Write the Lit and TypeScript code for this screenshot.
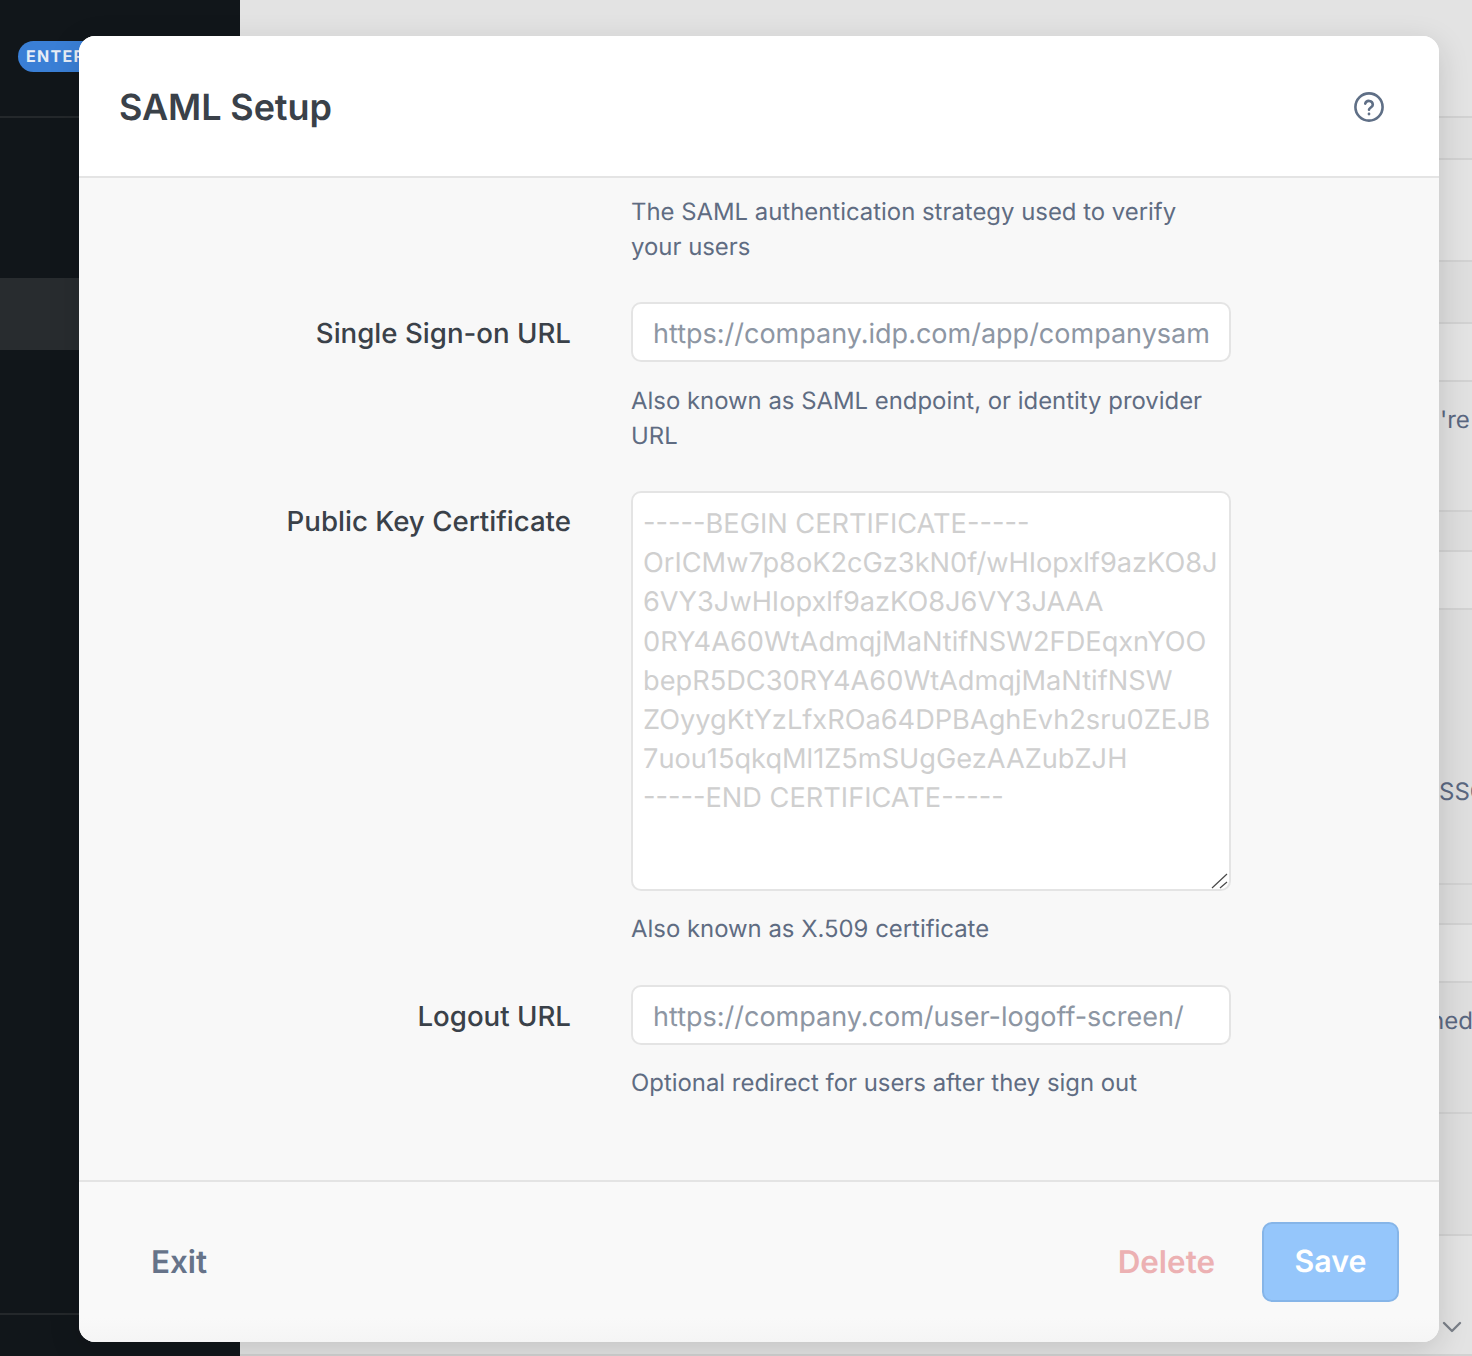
import { LitElement, html, css } from 'lit';
import { customElement } from 'lit/decorators.js';

const CERT = `-----BEGIN CERTIFICATE-----
OrICMw7p8oK2cGz3kN0f/wHIopxlf9azKO8J
6VY3JwHIopxlf9azKO8J6VY3JAAA
0RY4A60WtAdmqjMaNtifNSW2FDEqxnYOO
bepR5DC30RY4A60WtAdmqjMaNtifNSW
ZOyygKtYzLfxROa64DPBAghEvh2sru0ZEJB
7uou15qkqMl1Z5mSUgGezAAZubZJH
-----END CERTIFICATE-----`;

// rows of the dimmed page behind the dialog
const ROWS = [
  { h: 118, bg: '#e3e3e3' },
  { h: 42, bg: '#e0e0e0' },
  { h: 102, bg: '#e3e3e3' },
  { h: 62, bg: '#dedede' },
  { h: 58, bg: '#e3e3e3' },
  { h: 130, bg: '#e1e1e1', text: "'re", left: 1200, top: 23 },
  { h: 40, bg: '#dedede' },
  { h: 58, bg: '#e3e3e3' },
  { h: 275, bg: '#dedede', text: 'SSO', left: 1199, top: 167 },
  { h: 40, bg: '#dedede' },
  { h: 58, bg: '#e3e3e3' },
  { h: 131, bg: '#dedede', text: 'ned', left: 1190, top: 23 },
  { h: 122, bg: '#dedede' },
  { h: 120, bg: '#e3e3e3' },
];

@customElement('app-root')
export class AppRoot extends LitElement {
  static styles = css`
    :host {
      display: block;
      position: relative;
      width: 1472px;
      height: 1356px;
      overflow: hidden;
      font-family: Inter, 'Liberation Sans', sans-serif;
      background: #e3e3e3;
      text-rendering: geometricPrecision;
    }

    .page {
      display: flex;
      height: 100%;
    }

    .sidebar {
      width: 240px;
      flex: none;
      background: #11161a;
      display: flex;
      flex-direction: column;
    }
    .brand {
      height: 118px;
      flex: none;
      box-sizing: border-box;
      padding: 41px 0 0 18px;
      border-bottom: 2px solid #24282b;
    }
    .badge {
      display: inline-block;
      height: 31px;
      line-height: 31px;
      padding: 0 12px 0 8px;
      border-radius: 16px;
      background: #3a7fd6;
      color: #e6edf6;
      font-size: 16px;
      font-weight: 700;
      letter-spacing: 1.3px;
    }
    .nav-gap {
      height: 160px;
      flex: none;
    }
    .nav-active {
      height: 72px;
      flex: none;
      background: #282c2f;
    }
    .nav-rest {
      flex: 1;
    }
    .side-foot {
      height: 41px;
      flex: none;
      border-top: 2px solid #24282b;
    }

    .main {
      flex: 1;
      min-width: 0;
      overflow: hidden;
      position: relative;
    }
    .row {
      box-sizing: border-box;
      border-bottom: 2px solid #d2d2d2;
      white-space: nowrap;
      font-size: 24px;
      line-height: 30px;
      color: #5a6780;
    }
    .chevron {
      position: absolute;
      left: 1202px;
      top: 1320px;
      width: 20px;
      height: 14px;
    }

    .modal {
      position: absolute;
      left: 79px;
      top: 36px;
      width: 1360px;
      height: 1306px;
      border-radius: 16px;
      background: #f8f8f8;
      box-shadow: 0 8px 32px rgba(0, 0, 0, 0.14);
      display: flex;
      flex-direction: column;
      overflow: hidden;
    }
    .head {
      height: 142px;
      flex: none;
      box-sizing: border-box;
      background: #fff;
      border-bottom: 2px solid #e4e4e4;
      display: flex;
      align-items: center;
      justify-content: space-between;
      padding: 1px 54px 0 40px;
    }
    h1 {
      margin: 0;
      padding-top: 1px;
      font-size: 36px;
      font-weight: 600;
      color: #3a4149;
      letter-spacing: -0.1px;
    }
    .help-icon {
      width: 32px;
      height: 32px;
      display: block;
    }

    .body {
      flex: 1;
      box-sizing: border-box;
      padding-top: 17px;
      display: grid;
      grid-template-columns: 492px 600px;
      column-gap: 60px;
      align-content: start;
    }
    label {
      justify-self: end;
      height: 60px;
      box-sizing: border-box;
      padding-top: 1px;
      font-size: 27.65px;
      font-weight: 500;
      line-height: 60px;
      color: #3a4149;
    }
    label.flush {
      padding-top: 0;
    }
    .hint {
      margin: 0;
      font-size: 23.9px;
      line-height: 34.5px;
      color: #5f6c82;
    }
    .hint.top {
      grid-column: 2;
      margin-bottom: 38px;
    }
    .hint.gap {
      grid-column: 2;
      margin-top: 21px;
      margin-bottom: 38px;
    }
    .hint.first {
      margin-top: 22px;
    }
    input,
    textarea {
      display: block;
      width: 100%;
      box-sizing: border-box;
      border: 2px solid #e4e4e4;
      border-radius: 10px;
      background: #fff;
      font-family: inherit;
      margin: 0;
      outline: none;
      text-rendering: geometricPrecision;
    }
    input {
      height: 60px;
      padding: 2px 20px 0;
      font-size: 27px;
    }
    input.low {
      padding-top: 4px;
    }
    input::placeholder {
      color: #8d96a3;
      opacity: 1;
    }
    .area {
      position: relative;
    }
    textarea {
      height: 400px;
      padding: 11px 2px 11px 10px;
      font-size: 27.2px;
      line-height: 39.2px;
      resize: none;
      overflow: hidden;
    }
    textarea::placeholder {
      color: #cfcfcf;
      opacity: 1;
    }
    .grip {
      position: absolute;
      right: 2px;
      bottom: 2px;
      width: 18px;
      height: 17px;
    }

    .foot {
      height: 162px;
      flex: none;
      box-sizing: border-box;
      border-top: 2px solid #e4e4e4;
      background: linear-gradient(#f9f9f9 85%, #f5f5f5);
      display: flex;
      align-items: center;
      padding: 0 40px 0 72px;
      font-size: 31.4px;
      font-weight: 600;
    }
    .exit {
      color: #667389;
    }
    .delete {
      margin-left: auto;
      color: #ecb1b3;
    }
    .save {
      margin-left: 47px;
      width: 137px;
      height: 80px;
      box-sizing: border-box;
      border: 2px solid #86b5e8;
      border-radius: 10px;
      background: #95c6fb;
      color: #fff;
      font: inherit;
      font-size: 30.4px;
      padding: 0;
      text-rendering: geometricPrecision;
    }
  `;

  render() {
    return html`
      <div class="page">
        <aside class="sidebar">
          <div class="brand"><span class="badge">ENTERPRISE</span></div>
          <div class="nav-gap"></div>
          <div class="nav-active"></div>
          <div class="nav-rest"></div>
          <div class="side-foot"></div>
        </aside>
        <main class="main">
          ${ROWS.map(
            (r) => html`<div
              class="row"
              style="height:${r.h}px;background:${r.bg};padding-left:${r.left ?? 0}px;padding-top:${r.top ?? 0}px"
            >${r.text ?? ''}</div>`,
          )}
          <svg class="chevron" viewBox="0 0 20 14" fill="none" stroke="#7b8089" stroke-width="2.4" stroke-linecap="round" stroke-linejoin="round">
            <path d="M2 3l8 8 8-8" />
          </svg>
        </main>
      </div>

      <section class="modal">
        <header class="head">
          <h1>SAML Setup</h1>
          <svg class="help-icon" viewBox="0 0 32 32" fill="none" stroke="#5f6f86" stroke-width="2.6" stroke-linecap="round">
            <circle cx="16" cy="16" r="13.6" />
            <path d="M12.2 12.6a3.9 3.9 0 0 1 7.6 1.1c0 2.5-3.8 3-3.8 5.1" />
            <circle cx="16" cy="23" r="0.6" fill="#5f6f86" stroke-width="1.6" />
          </svg>
        </header>

        <div class="body">
          <p class="hint top">The SAML authentication strategy used to verify your users</p>

          <label>Single Sign-on URL</label>
          <input placeholder="https://company.idp.com/app/companysaml" />
          <p class="hint gap first">Also known as SAML endpoint, or identity provider URL</p>

          <label class="flush">Public Key Certificate</label>
          <div class="area">
            <textarea placeholder=${CERT}></textarea>
            <svg class="grip" viewBox="0 0 18 17" fill="none" stroke="#4a4a4a" stroke-width="1.2">
              <path d="M1 16L16 2M9 16l7-6" />
            </svg>
          </div>
          <p class="hint gap">Also known as X.509 certificate</p>

          <label>Logout URL</label>
          <input class="low" placeholder="https://company.com/user-logoff-screen/" />
          <p class="hint gap">Optional redirect for users after they sign out</p>
        </div>

        <footer class="foot">
          <span class="exit">Exit</span>
          <span class="delete">Delete</span>
          <button class="save">Save</button>
        </footer>
      </section>
    `;
  }
}
